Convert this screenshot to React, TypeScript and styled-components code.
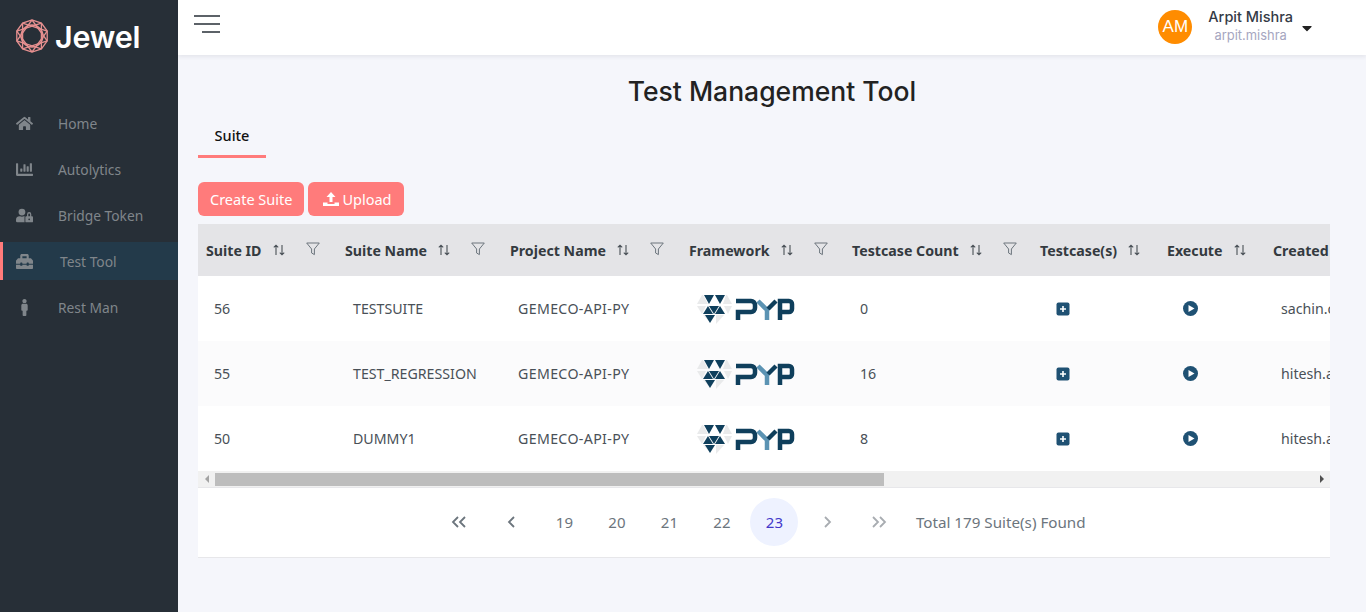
import React from 'react';
import styled, { createGlobalStyle } from 'styled-components';
import { FaHome, FaChartBar, FaUserLock, FaToolbox, FaMale, FaCaretDown } from 'react-icons/fa';

const GlobalStyle = createGlobalStyle`
  html, body { margin: 0; padding: 0; height: 100%; }
  body { background: #f5f6fb; font-family: "Noto Sans", "Open Sans", sans-serif; overflow: hidden; }
  * { box-sizing: border-box; }
`;

const Shell = styled.div`
  display: flex;
  height: 612px;
  width: 1366px;
`;

const Sidebar = styled.aside`
  width: 178px;
  flex: none;
  background: #272f37;
`;

const Brand = styled.div`
  display: flex;
  align-items: center;
  gap: 6px;
  height: 72px;
  padding: 0 0 0 15px;
  margin-bottom: 32px;
`;

const BrandName = styled.span`
  font-family: Inter, sans-serif;
  font-size: 30.5px;
  font-weight: 600;
  letter-spacing: -0.2px;
  color: #fff;
`;

const NavList = styled.nav`
  display: flex;
  flex-direction: column;
  gap: 8px;
`;

const NavItem = styled.div<{ $active?: boolean }>`
  display: flex;
  align-items: center;
  height: 38px;
  padding-left: ${p => (p.$active ? '13px' : '16px')};
  border-left: ${p => (p.$active ? '3px solid #ff7b7b' : 'none')};
  background: ${p => (p.$active ? '#233a4a' : 'transparent')};
  color: #80868b;
  font-size: 13.8px;
`;

const NavIcon = styled.span<{ $active?: boolean }>`
  width: ${p => (p.$active ? '44px' : '42px')};
  display: flex;
  align-items: center;
  font-size: 17px;
`;

const Main = styled.div`
  flex: 1;
  min-width: 0;
  display: flex;
  flex-direction: column;
`;

const Header = styled.header`
  height: 55px;
  background: #fff;
  box-shadow: 0 2px 4px rgba(40, 40, 70, 0.08);
  display: flex;
  align-items: flex-start;
  justify-content: space-between;
  padding: 0 51px 0 16px;
`;

const MenuIcon = styled.svg`
  margin-top: 15px;
`;

const User = styled.div`
  display: flex;
  align-items: center;
  height: 54px;
`;

const Avatar = styled.div`
  width: 34px;
  height: 34px;
  border-radius: 50%;
  background: #ff8c00;
  color: #fff;
  font-family: "Liberation Sans", sans-serif;
  font-size: 17px;
  display: flex;
  align-items: center;
  justify-content: center;
  margin-right: 16px;
`;

const UserText = styled.div`
  display: flex;
  flex-direction: column;
  align-items: center;
  font-family: Inter, sans-serif;
`;

const UserName = styled.div`
  font-size: 14.5px;
  font-weight: 500;
  color: #343a46;
  line-height: 18px;
`;

const UserLogin = styled.div`
  font-size: 12.9px;
  color: #a6a6bf;
  line-height: 20px;
`;

const Caret = styled.span`
  color: #222;
  font-size: 16px;
  display: flex;
  margin: 2px 0 0 6px;
`;

const Content = styled.main`
  padding: 0 36px 0 20px;
`;

const Title = styled.h1`
  margin: 0;
  height: 72px;
  padding: 19px 0 0 16px;
  font-family: Inter, sans-serif;
  font-size: 26.5px;
  line-height: 34px;
  font-weight: 500;
  color: #222;
  text-align: center;
`;

const Tab = styled.div`
  display: flex;
  justify-content: center;
  align-items: center;
  width: 68px;
  height: 31px;
  padding-bottom: 12px;
  border-bottom: 3px solid #ff7b7b;
  font-size: 14.5px;
  font-weight: 500;
  color: #111;
`;

const Actions = styled.div`
  display: flex;
  gap: 4px;
  margin: 24px 0 8px;
`;

const Button = styled.button`
  height: 34px;
  padding: 0 12px;
  border: none;
  border-radius: 6px;
  background: #ff7b7b;
  color: #fff;
  font: 14.5px "Noto Sans", sans-serif;
  display: flex;
  align-items: center;
  gap: 3px;
`;

const UploadButton = styled(Button)`
  padding-left: 15px;
`;

const Panel = styled.section`
  background: #fff;
  border-bottom: 1px solid #e7e7ea;
`;

const TableWrap = styled.div`
  overflow: hidden;
`;

const Table = styled.table`
  table-layout: fixed;
  width: 1232px;
  border-collapse: collapse;
  font-size: 14.2px;
`;

const Th = styled.th`
  height: 52px;
  padding: 0 0 0 8px;
  background: #e4e4e7;
  color: #343a40;
  text-align: left;
  font-weight: 700;
  white-space: nowrap;
`;

const HeadInner = styled.div`
  display: flex;
  align-items: center;
  gap: 11px;
`;

const Filter = styled.svg`
  margin-left: 10px;
  margin-top: 1px;
  margin-bottom: 4px;
`;

const Row = styled.tr<{ $striped?: boolean }>`
  background: ${p => (p.$striped ? '#fbfbfc' : '#fff')};
`;

const Td = styled.td`
  height: 65px;
  padding: 0 0 0 16px;
  color: #495057;
  white-space: nowrap;
  overflow: hidden;
`;

const ProjectCell = styled(Td)`
  letter-spacing: 0.35px;
`;

const IconCell = styled(Td)`
  padding-left: 24px;
`;

const LogoCell = styled(Td)`
  padding-left: 15px;
`;

const LogoSvg = styled.svg`
  display: block;
`;

const Scrollbar = styled.div`
  display: flex;
  align-items: center;
  height: 17px;
  background: #f1f1f1;
  border-bottom: 1px solid #e7e7ea;
`;

const ScrollArrow = styled.span<{ $dir: 'left' | 'right' }>`
  width: 17px;
  flex: none;
  display: flex;
  justify-content: center;
  &::before {
    content: '';
    border-top: 4px solid transparent;
    border-bottom: 4px solid transparent;
    ${p => (p.$dir === 'left' ? 'border-right: 4px solid #a3a3a3;' : 'border-left: 4px solid #505050;')}
  }
`;

const ScrollTrack = styled.div`
  flex: 1;
  height: 13px;
`;

const ScrollThumb = styled.div`
  height: 100%;
  background: #bdbdbd;
`;

const Pager = styled.div`
  height: 69px;
  display: flex;
  align-items: center;
  justify-content: center;
  padding: 0 7px 2px 0;
  gap: 4.5px;
`;

const PageBtn = styled.span<{ $active?: boolean; $disabled?: boolean }>`
  width: 48px;
  height: 48px;
  border-radius: 50%;
  display: flex;
  align-items: center;
  justify-content: center;
  font-size: 15px;
  background: ${p => (p.$active ? '#eef2ff' : 'transparent')};
  color: ${p => (p.$active ? '#4338ca' : p.$disabled ? '#a8acb1' : '#6c757d')};
`;

const Report = styled.span`
  margin-left: 8px;
  font-size: 15.2px;
  color: #6c757d;
`;

const SortIcon = () => (
  <svg width="12" height="12" viewBox="0 0 12 12" fill="none" stroke="#495057" strokeWidth="1.1">
    <path d="M3 11V1.2M.8 3.4 3 1.2l2.2 2.2M9 1v9.8M6.8 8.6 9 10.8l2.2-2.2" />
  </svg>
);

const FilterIcon = () => (
  <Filter width="14" height="14" viewBox="0 0 14 14" fill="none" stroke="#6c757d" strokeWidth="1">
    <path d="M.7 1h12.6L8.4 7v5.6L5.6 11V7z" />
  </Filter>
);

const HeadCell = ({ label, filter }: { label: string; filter?: boolean }) => (
  <Th>
    <HeadInner>
      {label}
      <SortIcon />
      {filter && <FilterIcon />}
    </HeadInner>
  </Th>
);

// the diamond of small triangles with the three letters of the PYP mark beside it
const PypLogo = () => (
  <LogoSvg width="100" height="32" viewBox="0 0 100 32">
    <g transform="translate(1 0)">
      <path fill="#e9eaeb" d="M0 11 5 2h1l5 9zM0 13h9l-4 8zM29 2h1l5 9h-9zM27 13h8l-4 8zM6 22h2l6 8zM19 22h8l-8 9z" />
      <path fill="#0f3f5c" d="M7 2h10l-5 9zM18 2h10l-5 9zM11 13l5 8H6zM12 13h10l-5 8zM23 13l5 8H18zM8 22h10l-5 8z" />
    </g>
    <g fill="none" strokeWidth="4.500">
      <path d="M42 27v-8h13a4 4 0 0 0 4-4v-3a4 4 0 0 0-4-4H40" stroke="#0f3f5c" />
      <path d="M62 8l9 9v10" stroke="#5b93b3" />
      <path d="M80 8l-8 8" stroke="#0f3f5c" />
      <path d="M84 27V8h9a3 3 0 0 1 3 3v5a3 3 0 0 1-3 3H84" stroke="#0f3f5c" />
    </g>
  </LogoSvg>
);

const jewelPoints = Array.from({ length: 10 }, (_, i) => {
  const a = (i * Math.PI) / 5 + Math.PI / 10;
  return [17 + 16 * Math.cos(a), 17 + 16 * Math.sin(a)];
});

const JewelLogo = () => (
  <svg width="34" height="34" viewBox="0 0 34 34" fill="none" stroke="#e58f8f" strokeWidth="1.300">
    <polygon points={jewelPoints.map(p => p.join(',')).join(' ')} />
    {jewelPoints.map((p, i) => {
      const q = jewelPoints[(i + 3) % 10];
      return <line key={i} x1={p[0]} y1={p[1]} x2={q[0]} y2={q[1]} />;
    })}
    <circle cx="17" cy="17" r="11" strokeWidth="1.300" />
  </svg>
);

const PlusIcon = () => (
  <svg width="14" height="14" viewBox="0 0 14 14" style={{ display: 'block' }}>
    <rect x="0.500" y="0.500" width="13" height="13" rx="2" fill="#1f5173" />
    <path d="M7 4v6M4 7h6" stroke="#fff" strokeWidth="1.600" />
  </svg>
);

const PlayIcon = () => (
  <svg width="15" height="15" viewBox="0 0 15 15" style={{ display: 'block' }}>
    <circle cx="7.500" cy="7.500" r="7.500" fill="#1f5173" />
    <path d="M5.500 4l6 3.500-6 3.500z" fill="#fff" />
  </svg>
);

const Chevron = ({ d }: { d: string }) => (
  <svg width="16" height="12" viewBox="0 0 16 12" fill="none" stroke="currentColor" strokeWidth="1.800">
    <path d={d} />
  </svg>
);

const navItems = [
  { label: 'Home', icon: <FaHome /> },
  { label: 'Autolytics', icon: <FaChartBar /> },
  { label: 'Bridge Token', icon: <FaUserLock /> },
  { label: 'Test Tool', icon: <FaToolbox />, active: true },
  { label: 'Rest Man', icon: <FaMale /> },
];

const rows = [
  { id: 56, name: 'TESTSUITE', count: 0, by: 'sachin.chauhan' },
  { id: 55, name: 'TEST_REGRESSION', count: 16, by: 'hitesh.agarwal' },
  { id: 50, name: 'DUMMY1', count: 8, by: 'hitesh.agarwal' },
];

const columns = [139, 165, 179, 163, 188, 127, 106, 165];

export default function App() {
  return (
    <Shell>
      <GlobalStyle />
      <Sidebar>
        <Brand>
          <JewelLogo />
          <BrandName>Jewel</BrandName>
        </Brand>
        <NavList>
          {navItems.map(item => (
            <NavItem key={item.label} $active={item.active}>
              <NavIcon $active={item.active}>{item.icon}</NavIcon>
              {item.label}
            </NavItem>
          ))}
        </NavList>
      </Sidebar>
      <Main>
        <Header>
          <MenuIcon width="28" height="20" viewBox="0 0 28 20" stroke="#272f37" strokeWidth="1.500">
            <path d="M0 1h26M0 9h26M8 17h18" />
          </MenuIcon>
          <User>
            <Avatar>AM</Avatar>
            <UserText>
              <UserName>Arpit Mishra</UserName>
              <UserLogin>arpit.mishra</UserLogin>
            </UserText>
            <Caret><FaCaretDown /></Caret>
          </User>
        </Header>
        <Content>
          <Title>Test Management Tool</Title>
          <Tab>Suite</Tab>
          <Actions>
            <Button>Create Suite</Button>
            <UploadButton>
              <svg width="16" height="16" viewBox="0 0 16 16" fill="#fff">
                <path d="M8 1l4.500 5H9.500v5h-3V6H3.500zM0 11.500h4.500v1.500h7v-1.500H16V15H0z" />
              </svg>
              Upload
            </UploadButton>
          </Actions>
          <Panel>
            <TableWrap>
              <Table>
                <colgroup>
                  {columns.map((w, i) => <col key={i} width={w} />)}
                </colgroup>
                <thead>
                  <tr>
                    <HeadCell label="Suite ID" filter />
                    <HeadCell label="Suite Name" filter />
                    <HeadCell label="Project Name" filter />
                    <HeadCell label="Framework" filter />
                    <HeadCell label="Testcase Count" filter />
                    <HeadCell label="Testcase(s)" />
                    <HeadCell label="Execute" />
                    <Th>Created By</Th>
                  </tr>
                </thead>
                <tbody>
                  {rows.map((row, i) => (
                    <Row key={row.id} $striped={i === 1}>
                      <Td>{row.id}</Td>
                      <Td>{row.name}</Td>
                      <ProjectCell>GEMECO-API-PY</ProjectCell>
                      <LogoCell><PypLogo /></LogoCell>
                      <Td>{row.count}</Td>
                      <IconCell><PlusIcon /></IconCell>
                      <IconCell><PlayIcon /></IconCell>
                      <Td>{row.by}</Td>
                    </Row>
                  ))}
                </tbody>
              </Table>
            </TableWrap>
            <Scrollbar>
              <ScrollArrow $dir="left" />
              <ScrollTrack>
                <ScrollThumb style={{ width: `${(669 / 1098) * 100}%` }} />
              </ScrollTrack>
              <ScrollArrow $dir="right" />
            </Scrollbar>
            <Pager>
              <PageBtn><Chevron d="M7 1 2 6l5 5M14 1 9 6l5 5" /></PageBtn>
              <PageBtn><Chevron d="M10 1 5 6l5 5" /></PageBtn>
              {[19, 20, 21, 22].map(n => <PageBtn key={n}>{n}</PageBtn>)}
              <PageBtn $active>23</PageBtn>
              <PageBtn $disabled><Chevron d="M6 1l5 5-5 5" /></PageBtn>
              <PageBtn $disabled><Chevron d="M2 1l5 5-5 5M9 1l5 5-5 5" /></PageBtn>
              <Report>Total 179 Suite(s) Found</Report>
            </Pager>
          </Panel>
        </Content>
      </Main>
    </Shell>
  );
}
